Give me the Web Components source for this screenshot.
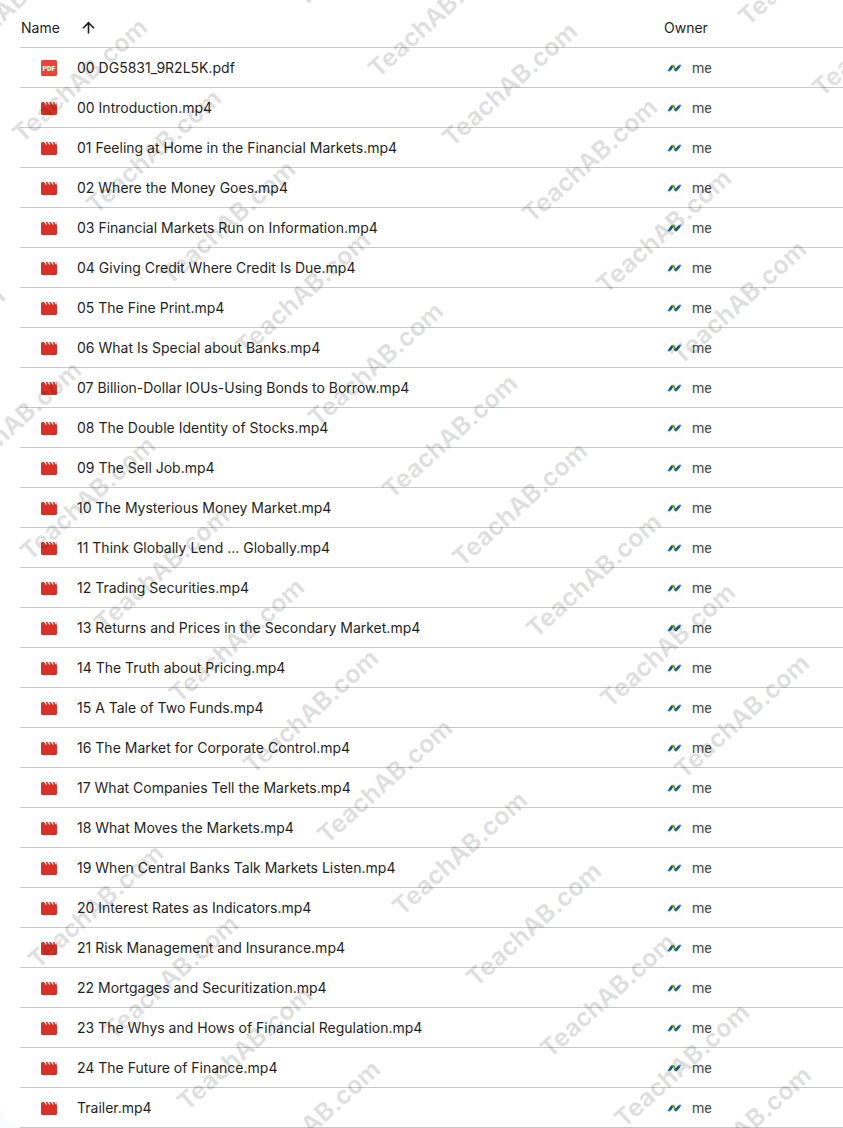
<!DOCTYPE html>
<html lang="en">
<head>
<meta charset="utf-8">
<meta name="viewport" content="width=device-width, initial-scale=1">
<title>Files</title>
<style>
    body {
        margin: 0;
        background: #f8fafd;
        color: #1f1f1f;
        font: 14px/20px Inter, "Noto Sans", sans-serif;
    }
</style>
</head>
<body>
<files-app></files-app>

<script>
const FILES = [
    '00 DG5831_9R2L5K.pdf',
    '00 Introduction.mp4',
    '01 Feeling at Home in the Financial Markets.mp4',
    '02 Where the Money Goes.mp4',
    '03 Financial Markets Run on Information.mp4',
    '04 Giving Credit Where Credit Is Due.mp4',
    '05 The Fine Print.mp4',
    '06 What Is Special about Banks.mp4',
    '07 Billion-Dollar IOUs-Using Bonds to Borrow.mp4',
    '08 The Double Identity of Stocks.mp4',
    '09 The Sell Job.mp4',
    '10 The Mysterious Money Market.mp4',
    '11 Think Globally Lend ... Globally.mp4',
    '12 Trading Securities.mp4',
    '13 Returns and Prices in the Secondary Market.mp4',
    '14 The Truth about Pricing.mp4',
    '15 A Tale of Two Funds.mp4',
    '16 The Market for Corporate Control.mp4',
    '17 What Companies Tell the Markets.mp4',
    '18 What Moves the Markets.mp4',
    '19 When Central Banks Talk Markets Listen.mp4',
    '20 Interest Rates as Indicators.mp4',
    '21 Risk Management and Insurance.mp4',
    '22 Mortgages and Securitization.mp4',
    '23 The Whys and Hows of Financial Regulation.mp4',
    '24 The Future of Finance.mp4',
    'Trailer.mp4'
];

// baseline start of every stamp
const STAMPS = [
    [-52, 73], [22, 144], [96, 215], [170, 286], [245, 357], [318, 428], [392, 500], [462, 568], [536, 639], [610, 709], [684, 780],
    [304, 8], [378, 79], [452, 148], [532, 224], [606, 295], [681, 366],
    [748, 27], [822, 98],
    [-120, 413], [-44, 487], [30, 562], [104, 633], [179, 704], [253, 775], [327, 845], [402, 917], [476, 988], [550, 1059], [624, 1129],
    [38, 970], [113, 1041], [187, 1112], [255, 1186], [686, 1192]
];

class Component extends HTMLElement {
    constructor() {
        super();
        this.attachShadow({mode: 'open'});
    }
    connectedCallback() {
        this.shadowRoot.innerHTML = `<style>${this.css()}</style>${this.render()}`;
    }
    css() { return ''; }
    render() { return ''; }
}

class FileIcon extends Component {
    css() {
        return `
            :host { display: block; width: 16px; height: 16px; }
            svg { display: block; }
            text { font: 900 7px Roboto, sans-serif; fill: #fff; }
        `;
    }
    render() {
        if(this.getAttribute('type') === 'pdf'){
            return `<svg width="16" height="16" viewBox="0 0 16 16" role="img" aria-label="PDF">
                <rect width="16" height="16" rx="1.5" fill="#ea4335"/>
                <text x="8" y="10.5" text-anchor="middle">PDF</text>
            </svg>`;
        }
        return `<svg width="16" height="16" viewBox="0 0 16 16" role="img" aria-label="Video">
            <path fill="#d93025" d="M1 2h14l1 1v10.5a1.5 1.5 0 0 1-1.500 1.500h-13A1.500 1.500 0 0 1 0 13.500V3z"/>
            <path fill="#fff" d="M3 2h1.700l1.300 2.500H4.700zM6.400 2h1.700l1.300 2.500H8.100zM9.800 2h1.700l1.300 2.500h-1.300zM13.200 2h1.700l1.100 2.200v.3h-1.100z"/>
        </svg>`;
    }
}

class OwnerChip extends Component {
    css() {
        return `
            :host { display: flex; align-items: center; gap: 8px; color: #444746; font-family: Roboto, sans-serif; }
            svg { display: block; }
        `;
    }
    render() {
        return `<svg width="20" height="20" viewBox="0 0 20 20" fill="none" aria-hidden="true">
                <circle cx="10" cy="10" r="9.5" fill="#fff" stroke="#f6f6f6"/>
                <path fill="#1575b8" d="M3.200 13.300L5.800 13.300 7.500 11.500 6.200 9z"/>
                <path fill="#124f87" d="M4.800 11.200L7.200 7.600Q8 6.700 9.300 6.700L9.600 8.600 6.800 12.400z"/>
                <path fill="#1685c7" d="M17.500 6.700H15.200L13.500 8.500 15 11z"/>
                <path fill="#124f87" d="M15.900 8.800L13.400 12.400Q12.600 13.300 11.300 13.300L11 11.400 13.900 7.900z"/>
                <path fill="#69a83a" d="M8 6.900Q10.600 6.100 11.200 8.400L11.900 11 9.900 11.700 9.200 9.200Q8.900 8.200 8 8.200z"/>
                <path fill="#2f8038" d="M9.700 11L11.800 10.600 12.600 13.100Q10.400 13.900 9.700 11z"/>
            </svg>
            <slot></slot>`;
    }
}

class FileTable extends Component {
    css() {
        return `
            :host { display: block; padding-left: 20px; background: #fff; border-bottom-left-radius: 24px; }
            table { width: 100%; border-collapse: separate; border-spacing: 0; table-layout: fixed; }
            th, td { box-sizing: border-box; height: 40px; padding: 0; border-bottom: 1px solid #c7c7c7; text-align: left; font-weight: 400; }
            th { height: 48px; padding-top: 8px; }
            .owner { width: 179px; }
            button { display: flex; align-items: center; gap: 20px; padding: 0 1px; border: 0; background: none; color: inherit; font: inherit; }
            button svg { display: block; }
            .file { display: flex; align-items: center; gap: 20px; padding-left: 21px; }
            .file span { overflow: hidden; white-space: nowrap; text-overflow: ellipsis; }
        `;
    }
    row(name) {
        return `<tr>
            <td><div class="file"><file-icon type="${name.split('.').pop()}"></file-icon><span>${name}</span></div></td>
            <td><owner-chip>me</owner-chip></td>
        </tr>`;
    }
    render() {
        return `<table>
            <thead><tr>
                <th scope="col" aria-sort="ascending"><button type="button">Name
                    <svg width="16" height="16" viewBox="0 0 16 16" fill="none" stroke="#1f1f1f" stroke-width="1.6" aria-hidden="true"><path d="M8.500 13.500V3M3 8.200L8.500 2.700l5.500 5.500"/></svg>
                </button></th>
                <th scope="col" class="owner">Owner</th>
            </tr></thead>
            <tbody>${FILES.map(name => this.row(name)).join('')}</tbody>
        </table>`;
    }
}

class StampLayer extends Component {
    css() {
        return `
            :host { position: absolute; inset: 0; overflow: hidden; pointer-events: none; }
            svg { display: block; width: 100%; height: 100%; }
            text { font: 700 25px Inter, sans-serif; fill: #000; fill-opacity: .12; }
        `;
    }
    render() {
        const label = this.getAttribute('label');
        return `<svg>${STAMPS.map(([x, y]) => `<text transform="translate(${x} ${y}) rotate(-42)">${label}</text>`).join('')}</svg>`;
    }
}

class FilesApp extends Component {
    css() {
        return `:host { display: block; position: relative; }`;
    }
    render() {
        return `<file-table></file-table><stamp-layer label="TeachAB.com"></stamp-layer>`;
    }
}

customElements.define('file-icon', FileIcon);
customElements.define('owner-chip', OwnerChip);
customElements.define('file-table', FileTable);
customElements.define('stamp-layer', StampLayer);
customElements.define('files-app', FilesApp);
</script>
</body>
</html>
